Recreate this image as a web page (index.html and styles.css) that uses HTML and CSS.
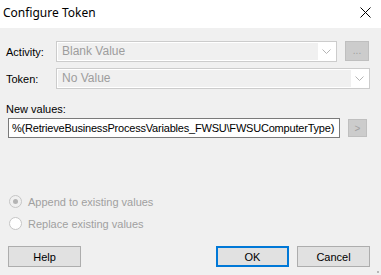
FILE: index.html
```html
<!DOCTYPE html>
<html lang="en">
<head>
  <meta charset="UTF-8">
  <title>Configure Token</title>
  <link rel="stylesheet" href="styles.css">
</head>
<body>
  <div class="dialog">
    <div class="titlebar">
      <span class="title">Configure Token</span>
      <svg class="close" width="11" height="11" viewBox="0 0 11 11">
        <path d="M0.5 0.5 L10.5 10.5 M10.5 0.5 L0.5 10.5" stroke="#000" stroke-width="1" fill="none"/>
      </svg>
    </div>

    <div class="content">
      <div class="field-row">
        <label class="field-label">Activity:</label>
        <div class="combo">
          <span class="combo-text">Blank Value</span>
          <span class="combo-arrow">
            <svg width="9" height="5" viewBox="0 0 9 5"><path d="M0.5 0.5 L4.5 4.5 L8.5 0.5" stroke="#b4b4b4" fill="none"/></svg>
          </span>
        </div>
        <button class="small-btn ellipsis" disabled>...</button>
      </div>

      <div class="field-row token-row">
        <label class="field-label">Token:</label>
        <div class="combo">
          <span class="combo-text">No Value</span>
          <span class="combo-arrow">
            <svg width="9" height="5" viewBox="0 0 9 5"><path d="M0.5 0.5 L4.5 4.5 L8.5 0.5" stroke="#b4b4b4" fill="none"/></svg>
          </span>
        </div>
      </div>

      <div class="values-label">New values:</div>
      <div class="values-row">
        <div class="textbox">%(RetrieveBusinessProcessVariables_FWSU\FWSUComputerType)</div>
        <button class="small-btn insert" disabled>&gt;</button>
      </div>

      <div class="options">
        <label class="radio checked"><span class="radio-dot"></span>Append to existing values</label>
        <label class="radio"><span class="radio-dot"></span>Replace existing values</label>
      </div>

      <div class="buttons">
        <button class="btn">Help</button>
        <span class="spacer"></span>
        <button class="btn default">OK</button>
        <button class="btn">Cancel</button>
      </div>
    </div>
    <div class="grip"></div>
  </div>
</body>
</html>
```

FILE: styles.css
```css
body {
  margin: 0;
  background-color: #f0f0f0;
  font-family: 'Liberation Sans', Arial, sans-serif;
  font-size: 11px;
  color: #000;
}

.dialog {
  width: 381px;
  height: 275px;
  position: relative;
  overflow: hidden;
}

.titlebar {
  height: 28px;
  background-color: #fff;
  display: flex;
  align-items: center;
  justify-content: space-between;
  padding: 0 10px 0 3px;
}

.title {
  font-family: 'Noto Sans', sans-serif;
  font-size: 12px;
  margin-top: -3px;
}

.close {
  margin-top: -3px;
}

.content {
  padding: 13px 11px 0 6px;
}

.field-row {
  display: flex;
  align-items: center;
  height: 21px;
}

.token-row {
  margin-top: 6px;
}

.field-label {
  width: 50px;
}

.combo {
  flex: 1;
  display: flex;
  height: 21px;
  box-sizing: border-box;
  border: 1px solid #cccccc;
  background-color: #fff;
  padding: 1px;
}

.combo-text {
  flex: 1;
  background-color: #f0f0f0;
  color: #9d9d9d;
  font-size: 12px;
  padding-left: 4px;
  line-height: 17px;
}

.combo-arrow {
  width: 17px;
  display: flex;
  align-items: center;
  justify-content: center;
}

.small-btn {
  box-sizing: border-box;
  background-color: #cccccc;
  border: 1px solid #bfbfbf;
  color: #a0a0a0;
  font-family: 'Liberation Sans', Arial, sans-serif;
  font-size: 10px;
  padding: 0;
}

.ellipsis {
  width: 24px;
  height: 20px;
  margin-left: 8px;
  margin-right: 1px;
  margin-top: -1px;
  line-height: 18px;
}

.values-label {
  margin-top: 14px;
  height: 13px;
}

.values-row {
  display: flex;
  align-items: center;
  margin-top: 2px;
  margin-left: 2px;
}

.textbox {
  width: 332px;
  height: 20px;
  box-sizing: border-box;
  border: 1px solid #7a7a7a;
  background-color: #fff;
  padding-left: 3px;
  line-height: 18px;
  letter-spacing: -0.2px;
  white-space: nowrap;
  overflow: hidden;
}

.insert {
  width: 19px;
  height: 18px;
  margin-left: 8px;
}

.options {
  margin-top: 57px;
  display: flex;
  flex-direction: column;
  gap: 9px;
}

.radio {
  display: flex;
  align-items: center;
  color: #a0a0a0;
  font-size: 11px;
  height: 13px;
}

.radio-dot {
  width: 11px;
  height: 11px;
  border: 1px solid #c6c6c6;
  border-radius: 50%;
  background-color: #fff;
  margin: 0 6px 0 3px;
  position: relative;
}

.radio.checked .radio-dot {
  background-color: #f0f0f0;
}

.radio.checked .radio-dot::after {
  content: '';
  position: absolute;
  left: 3px;
  top: 3px;
  width: 5px;
  height: 5px;
  border-radius: 50%;
  background-color: #b4b4b4;
}

.buttons {
  display: flex;
  margin-top: 16px;
  margin-left: 2px;
  gap: 8px;
}

.spacer {
  flex: 1;
}

.btn {
  width: 73px;
  height: 21px;
  box-sizing: border-box;
  background-color: #e1e1e1;
  border: 1px solid #adadad;
  font-family: 'Liberation Sans', Arial, sans-serif;
  font-size: 11px;
  color: #000;
  padding: 0;
}

.btn.default {
  border: 2px solid #0078d7;
}

.grip {
  position: absolute;
  right: 2px;
  bottom: 2px;
  width: 2px;
  height: 2px;
  background-color: #b8b8b8;
}
```
